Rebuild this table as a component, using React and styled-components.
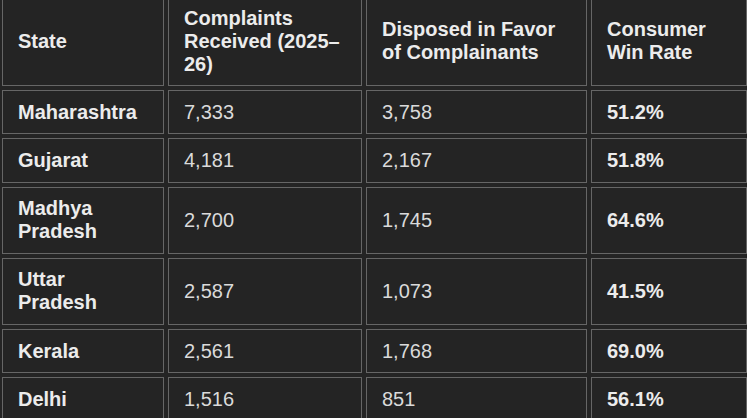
import React from 'react';
import styled, { createGlobalStyle } from 'styled-components';

const GlobalStyle = createGlobalStyle`
  html, body {
    margin: 0;
    padding: 0;
    background: #242424;
    overflow: hidden;
  }
  body {
    font-family: "Liberation Sans", Arial, sans-serif;
    color: #dedede;
  }
`;

const Table = styled.table`
  border-collapse: separate;
  border-spacing: 4px;
  table-layout: fixed;
  width: 753px;
  margin: -8px 0 0 -2px;
  background: #242424;
  font-size: 20px;
  line-height: 23px;
`;

const Head = styled.th`
  width: ${(p) => p.$w}px;
  padding: 9.6px 15px;
  border: 1px solid #666;
  text-align: left;
  vertical-align: middle;
  font-weight: 700;
  color: #ececec;
`;

const Cell = styled.td`
  padding: 9.6px 15px;
  border: 1px solid #666;
  vertical-align: middle;
  font-weight: ${(p) => (p.$bold ? 700 : 400)};
  color: ${(p) => (p.$bold ? '#ececec' : '#dadada')};
`;

const rows = [
  ['Maharashtra', '7,333', '3,758', '51.2%'],
  ['Gujarat', '4,181', '2,167', '51.8%'],
  ['Madhya Pradesh', '2,700', '1,745', '64.6%'],
  ['Uttar Pradesh', '2,587', '1,073', '41.5%'],
  ['Kerala', '2,561', '1,768', '69.0%'],
  ['Delhi', '1,516', '851', '56.1%'],
];

export default function App() {
  return (
    <>
      <GlobalStyle />
      <Table>
        <thead>
          <tr>
            <Head $w={130}>State</Head>
            <Head $w={162}>Complaints Received (2025–26)</Head>
            <Head $w={189}>Disposed in Favor of Complainants</Head>
            <Head $w={124}>Consumer Win Rate</Head>
          </tr>
        </thead>
        <tbody>
          {rows.map(([state, received, disposed, rate]) => (
            <tr key={state}>
              <Cell $bold>{state}</Cell>
              <Cell>{received}</Cell>
              <Cell>{disposed}</Cell>
              <Cell $bold>{rate}</Cell>
            </tr>
          ))}
        </tbody>
      </Table>
    </>
  );
}
